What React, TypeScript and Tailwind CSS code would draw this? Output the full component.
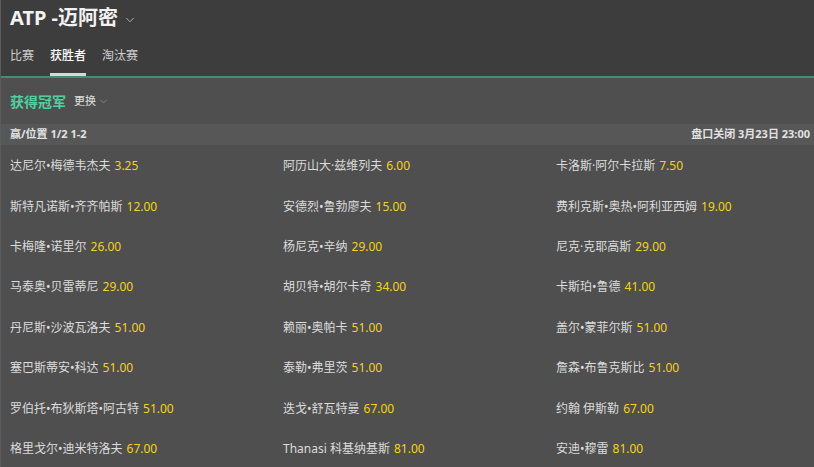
import { ChevronDown } from 'lucide-react'

type Pick = { name: string; odds: string }

const picks: Pick[] = [
  { name: '达尼尔•梅德韦杰夫', odds: '3.25' },
  { name: '阿历山大·兹维列夫', odds: '6.00' },
  { name: '卡洛斯·阿尔卡拉斯', odds: '7.50' },
  { name: '斯特凡诺斯•齐齐帕斯', odds: '12.00' },
  { name: '安德烈•鲁勃廖夫', odds: '15.00' },
  { name: '费利克斯•奥热•阿利亚西姆', odds: '19.00' },
  { name: '卡梅隆•诺里尔', odds: '26.00' },
  { name: '杨尼克•辛纳', odds: '29.00' },
  { name: '尼克·克耶高斯', odds: '29.00' },
  { name: '马泰奥•贝雷蒂尼', odds: '29.00' },
  { name: '胡贝特•胡尔卡奇', odds: '34.00' },
  { name: '卡斯珀•鲁德', odds: '41.00' },
  { name: '丹尼斯•沙波瓦洛夫', odds: '51.00' },
  { name: '赖丽•奥帕卡', odds: '51.00' },
  { name: '盖尔•蒙菲尔斯', odds: '51.00' },
  { name: '塞巴斯蒂安•科达', odds: '51.00' },
  { name: '泰勒•弗里茨', odds: '51.00' },
  { name: '詹森•布鲁克斯比', odds: '51.00' },
  { name: '罗伯托•布狄斯塔•阿古特', odds: '51.00' },
  { name: '迭戈•舒瓦特曼', odds: '67.00' },
  { name: '约翰 伊斯勒', odds: '67.00' },
  { name: '格里戈尔•迪米特洛夫', odds: '67.00' },
  { name: 'Thanasi 科基纳基斯', odds: '81.00' },
  { name: '安迪•穆雷', odds: '81.00' },
]

const tabs = ['比赛', '获胜者', '淘汰赛']

export default function App() {
  return (
    <div
      className="w-[814px] h-[467px] overflow-hidden bg-[#4f4f4f] text-[#dcdcdc] border-l border-[#5c5c5c]"
      style={{ fontFamily: '"Noto Sans", "Noto Sans CJK SC", sans-serif' }}
    >
      <div className="bg-[#3d3d3d] border-b-2 border-[#3f8f72]">
        <div className="flex items-center h-[35px] pl-[9px]">
          <h1 className="text-[20px] font-bold text-[#f2f2f2] leading-none">ATP -迈阿密</h1>
          <ChevronDown size={14} className="ml-[5px] mt-[4px] text-[#bbbbbb]" strokeWidth={1.5} />
        </div>
        <div className="flex h-[41px] pl-[9px] gap-[16px] text-[12px]">
          {tabs.map(t => (
            <div
              key={t}
              className={
                'flex items-center pt-[4px] border-b-[3px] ' +
                (t === '获胜者' ? 'border-[#d8d8d8] text-white font-medium' : 'border-transparent text-[#cfcfcf]')
              }
            >
              {t}
            </div>
          ))}
        </div>
      </div>

      <div className="flex items-center h-[46px] pl-[9px]">
        <span className="text-[14px] font-bold text-[#4fd1a0]">获得冠军</span>
        <span className="ml-[8px] text-[11px] text-[#e0e0e0]">更换</span>
        <ChevronDown size={11} className="ml-[2px] text-[#9a9a9a]" strokeWidth={1.5} />
      </div>

      <div className="flex items-center justify-between h-[21px] px-[9px] bg-[#575757] text-[11px] font-bold text-[#e2e2e2]">
        <span>赢/位置 1/2 1-2</span>
        <span className="mr-[-5px]">盘口关闭 3月23日 23:00</span>
      </div>

      <div className="grid grid-cols-[273px_273px_1fr] pl-[9px] pt-[1px] text-[12px]">
        {picks.map((p, i) => (
          <div key={i} className="flex items-center h-[40.4px] whitespace-nowrap">
            <span className="text-[#dcdcdc]">{p.name}</span>
            <span className="ml-[4px] text-[#f5d21c]">{p.odds}</span>
          </div>
        ))}
      </div>
    </div>
  )
}
